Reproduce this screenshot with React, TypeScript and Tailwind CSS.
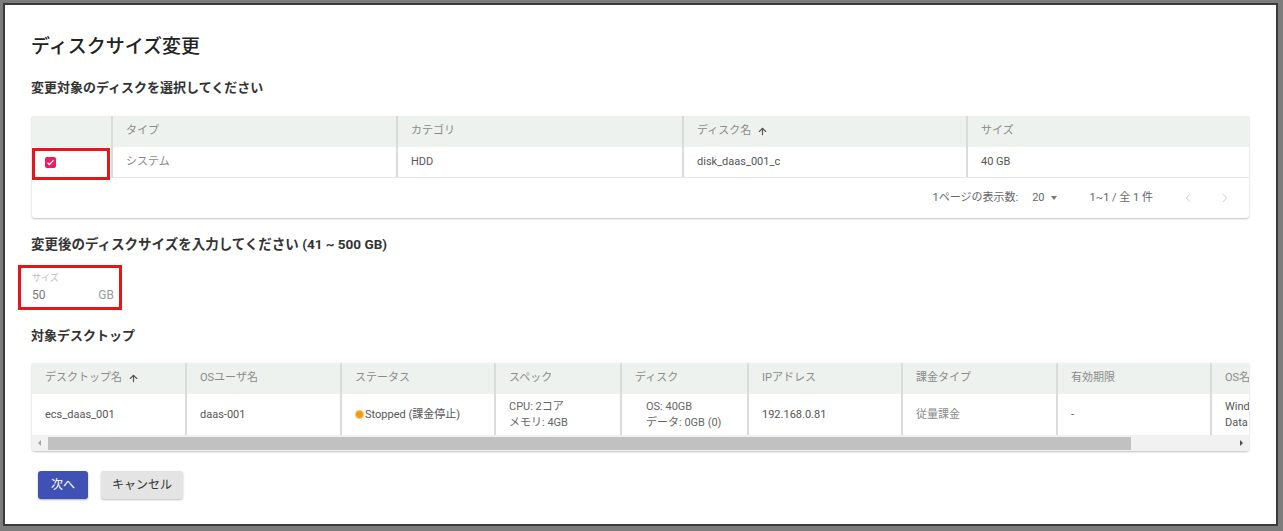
import { ArrowUp, ChevronLeft, ChevronRight } from "lucide-react"

const diskCols = ["タイプ", "カテゴリ", "ディスク名", "サイズ"]

const deskCols: { label: string; w: string; sort?: boolean }[] = [
  { label: "デスクトップ名", w: "w-[153px]", sort: true },
  { label: "OSユーザ名", w: "w-[155px]" },
  { label: "ステータス", w: "w-[154px]" },
  { label: "スペック", w: "w-[126px]" },
  { label: "ディスク", w: "w-[127px]" },
  { label: "IPアドレス", w: "w-[154px]" },
  { label: "課金タイプ", w: "w-[155px]" },
  { label: "有効期限", w: "w-[154px]" },
  { label: "OS名", w: "w-[220px]" },
]

function Checked() {
  return (
    <span className="flex h-[11px] w-[11px] items-center justify-center rounded-[2px] bg-[#e91e63]">
      <svg viewBox="0 0 12 12" className="h-[9px] w-[9px]" fill="none" stroke="white" strokeWidth="1.8">
        <path d="M2 6.2l2.6 2.5L10 3.2" />
      </svg>
    </span>
  )
}

export default function App() {
  return (
    <div className="h-[531px] w-[1283px] overflow-hidden bg-[#7c7c7c] pl-[3px] pt-[3px] font-['Roboto','Noto_Sans_CJK_JP',sans-serif]">
      <div className="h-[523px] w-[1275px] border-2 border-[#3a3a3a] bg-white pl-[26px] pr-[27px] pt-[28px]">
        <h1 className="h-[28px] text-[19px] font-medium leading-[28px] text-[#222]">ディスクサイズ変更</h1>
        <h2 className="mt-[17px] text-[13px] font-bold leading-[20px] text-[#333]">変更対象のディスクを選択してください</h2>

        {/* disk table */}
        <div className="ml-[1px] mt-[18px] w-[1217px] rounded-b-[3px] shadow-[0_1px_2px_rgba(0,0,0,0.25)]">
          <div className="grid h-[31px] grid-cols-[79px_285px_286px_284px_1fr] bg-[#eef2ef] text-[11px] text-[#8a8a8a]">
            <div />
            {diskCols.map((c) => (
              <div key={c} className="flex items-center gap-[6px] border-l-2 border-[#d9dcd9] pl-[13px]">
                {c}
                {c === "ディスク名" && <ArrowUp className="h-[11px] w-[11px] text-[#555]" strokeWidth={2.5} />}
              </div>
            ))}
          </div>
          <div className="grid h-[31px] grid-cols-[79px_285px_286px_284px_1fr] border-b border-[#e6e6e6] text-[11px] text-[#555]">
            <div className="relative flex items-center pl-[13px]">
              <Checked />
              <div className="absolute left-0 top-[1px] h-[32px] w-[78px] border-[3px] border-[#e8141c]" />
            </div>
            <div className="flex items-center border-l-2 border-[#d9dcd9] pl-[13px] text-[#8a8a8a]">システム</div>
            <div className="flex items-center border-l-2 border-[#d9dcd9] pl-[13px]">HDD</div>
            <div className="flex items-center border-l-2 border-[#d9dcd9] pl-[13px]">disk_daas_001_c</div>
            <div className="flex items-center border-l-2 border-[#d9dcd9] pl-[13px]">40 GB</div>
          </div>
          <div className="flex h-[40px] items-center justify-end pr-[17px] text-[11px] text-[#666]">
            <span>1ページの表示数:</span>
            <span className="ml-[14px] flex items-center gap-[6px]">
              20
              <span className="h-0 w-0 border-x-[3.5px] border-t-[4px] border-x-transparent border-t-[#777]" />
            </span>
            <span className="ml-[33px]">1~1 / 全 1 件</span>
            <ChevronLeft className="ml-[28px] h-[14px] w-[14px] text-[#c4c4c4]" strokeWidth={1.5} />
            <ChevronRight className="ml-[23px] h-[14px] w-[14px] text-[#c4c4c4]" strokeWidth={1.5} />
          </div>
        </div>

        <h2 className="mt-[16px] text-[13.5px] font-bold leading-[20px] text-[#333]">
          変更後のディスクサイズを入力してください (41 ~ 500 GB)
        </h2>
        <div className="-ml-[13px] mt-[11px] h-[45px] w-[104px] border-[3px] border-[#e8141c] pl-[11px] pr-[5px]">
          <div className="mt-[5px] text-[9px] leading-[11px] text-[#bdbdbd]">サイズ</div>
          <div className="mt-[3px] flex items-center justify-between text-[12px] leading-[16px] text-[#777]">
            <span>50</span>
            <span className="text-[#9a9a9a]">GB</span>
          </div>
        </div>

        <h2 className="mt-[16px] text-[13px] font-bold leading-[20px] text-[#333]">対象デスクトップ</h2>

        {/* desktop table */}
        <div className="ml-[1px] mt-[17px] w-[1217px] overflow-hidden rounded-b-[3px] shadow-[0_1px_2px_rgba(0,0,0,0.25)]">
          <div className="flex h-[31px] w-max bg-[#eef2ef] text-[11px] text-[#8a8a8a]">
            {deskCols.map((c, i) => (
              <div
                key={c.label}
                className={`flex shrink-0 items-center gap-[6px] pl-[13px] ${c.w} ${i > 0 ? "border-l-2 border-[#d9dcd9]" : ""}`}
              >
                {c.label}
                {c.sort && <ArrowUp className="h-[11px] w-[11px] text-[#555]" strokeWidth={2.5} />}
              </div>
            ))}
          </div>
          <div className="flex h-[41px] w-max text-[11px] leading-[16px] text-[#555]">
            <div className="flex w-[153px] shrink-0 items-center pl-[13px]">ecs_daas_001</div>
            <div className="flex w-[155px] shrink-0 items-center border-l-2 border-[#d9dcd9] pl-[13px]">daas-001</div>
            <div className="flex w-[154px] shrink-0 items-center border-l-2 border-[#d9dcd9] pl-[13px]">
              <span className="mr-[1px] h-[9px] w-[9px] rounded-full border-[1.5px] border-[#ffc46b] bg-[#f59a0c]" />
              Stopped (課金停止)
            </div>
            <div className="flex w-[126px] shrink-0 flex-col justify-center border-l-2 border-[#d9dcd9] pl-[13px] text-[#666]">
              <span>CPU: 2コア</span>
              <span>メモリ: 4GB</span>
            </div>
            <div className="flex w-[127px] shrink-0 flex-col justify-center border-l-2 border-[#d9dcd9] pl-[24px] text-[#666]">
              <span>OS: 40GB</span>
              <span>データ: 0GB (0)</span>
            </div>
            <div className="flex w-[154px] shrink-0 items-center border-l-2 border-[#d9dcd9] pl-[13px]">192.168.0.81</div>
            <div className="flex w-[155px] shrink-0 items-center border-l-2 border-[#d9dcd9] pl-[13px] text-[#8a8a8a]">従量課金</div>
            <div className="flex w-[154px] shrink-0 items-center border-l-2 border-[#d9dcd9] pl-[13px]">-</div>
            <div className="flex w-[220px] shrink-0 flex-col justify-center border-l-2 border-[#d9dcd9] pl-[13px]">
              <span>Windows Server 2016</span>
              <span>Data Center</span>
            </div>
          </div>
          <div className="flex h-[16px] items-center bg-[#f1f1f1]">
            <span className="ml-[6px] h-0 w-0 border-y-[3px] border-r-[3px] border-y-transparent border-r-[#a3a3a3]" />
            <div className="ml-[7px] h-[13px] w-[1083px] bg-[#c1c1c1]" />
            <span className="ml-auto mr-[6px] h-0 w-0 border-y-[3px] border-l-[3px] border-y-transparent border-l-[#505050]" />
          </div>
        </div>

        <div className="mt-[20px] flex gap-[13px] pl-[7px]">
          <button className="h-[28px] w-[50px] rounded-[3px] bg-[#3f51b5] text-[12px] text-white shadow-[0_1px_2px_rgba(0,0,0,0.3)]">
            次へ
          </button>
          <button className="h-[28px] w-[82px] rounded-[3px] bg-[#e4e4e4] text-[12px] text-[#333] shadow-[0_1px_2px_rgba(0,0,0,0.25)]">
            キャンセル
          </button>
        </div>
      </div>
    </div>
  )
}
